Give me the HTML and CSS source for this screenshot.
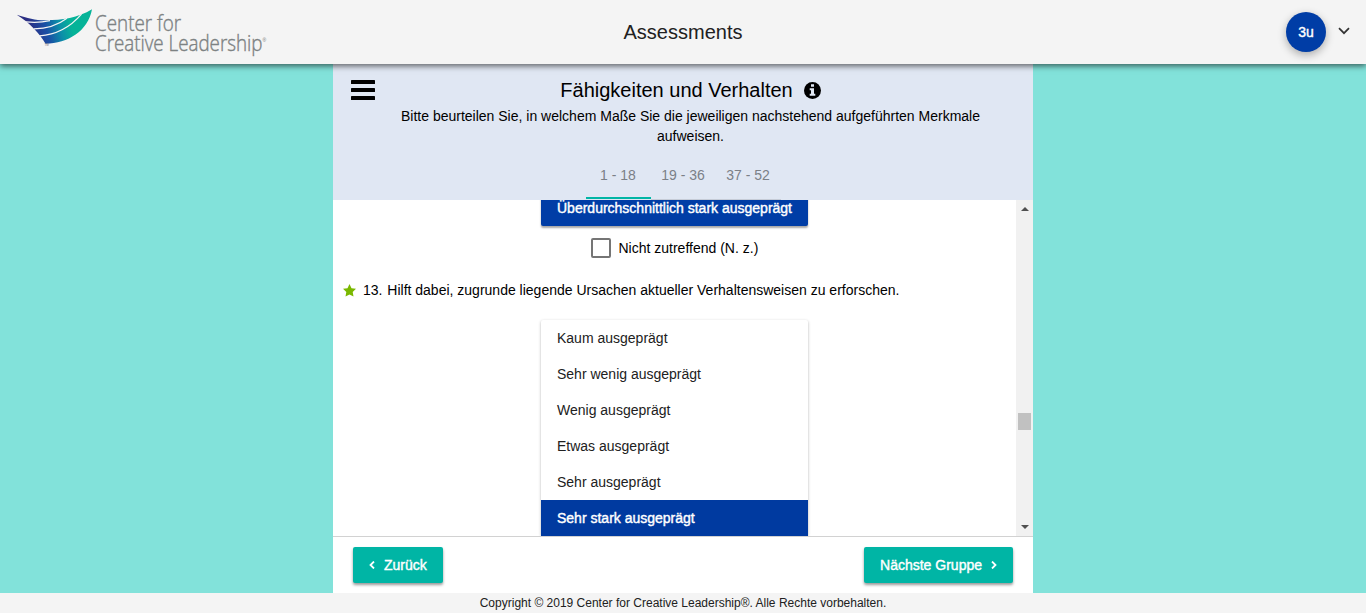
FILE: index.html
```html
<!DOCTYPE html>
<html lang="de">
<head>
<meta charset="utf-8">
<title>Assessments</title>
<link rel="stylesheet" href="styles.css">
</head>
<body>
<header class="topbar">
  <svg class="logo" viewBox="0 0 280 64" role="img" aria-label="Center for Creative Leadership">
    <defs>
      <linearGradient id="wing" gradientUnits="userSpaceOnUse" x1="30" y1="30" x2="74" y2="18">
        <stop offset="0" stop-color="#2b2e83"/>
        <stop offset=".35" stop-color="#1a4fa5"/>
        <stop offset=".65" stop-color="#0b8fa8"/>
        <stop offset=".9" stop-color="#05b398"/>
      </linearGradient>
    </defs>
    <path fill="url(#wing)" d="M16.700 14.800C28 18.500 36 20.500 46 20.300C62 20 78 18 92 9.300C88 31 68 43.500 45.500 43.800C40 34 30 23 16.700 14.800Z"/>
    <path class="feather" d="M26 21.800Q38 23.200 50 20.600M34 28.800Q53 28.800 67 18.300M39.500 35.800Q64 34.500 81.500 14.200"/>
    <text class="logo-tm" x="44.500" y="46">TM</text>
    <text class="logo-text" x="95" y="31" textLength="86" lengthAdjust="spacingAndGlyphs">Center for</text>
    <text class="logo-text" x="95" y="50.700" textLength="167.500" lengthAdjust="spacingAndGlyphs">Creative Leadership</text>
    <text class="logo-reg" x="262.500" y="42">®</text>
  </svg>
  <h1 class="topbar-title">Assessments</h1>
  <div class="account">
    <span class="avatar">3u</span>
    <svg class="account-caret" viewBox="0 0 12 8"><path d="M1 1.200L6 6.200L11 1.200"/></svg>
  </div>
</header>
<main class="stage">
  <section class="panel">
    <div class="intro">
      <svg class="menu-icon" viewBox="0 0 24 20"><rect width="24" height="4" rx=".6"/><rect y="8" width="24" height="4" rx=".6"/><rect y="16" width="24" height="4" rx=".6"/></svg>
      <div class="intro-body">
        <h2 class="intro-title"><span class="intro-heading">Fähigkeiten und Verhalten</span>
          <svg class="info-icon" viewBox="0 0 17 17"><circle cx="8.500" cy="8.500" r="8.500"/><path d="M7 2.300h3v2.500H7zM5.700 6.200H10v5.600h1.300v2H5.700v-2H7V8.200H5.700z"/></svg>
        </h2>
        <p class="intro-text">Bitte beurteilen Sie, in welchem Maße Sie die jeweiligen nachstehend aufgeführten Merkmale aufweisen.</p>
      </div>
    </div>
    <nav class="tabs"><a class="tab tab-active">1 - 18</a><a class="tab">19 - 36</a><a class="tab">37 - 52</a></nav>
    <div class="scroller">
      <div class="questions">
        <div class="option option-chosen option-last">Überdurchschnittlich stark ausgeprägt</div>
        <label class="na"><span class="checkbox"></span><span class="na-text">Nicht zutreffend (N. z.)</span></label>
        <div class="question">
          <svg class="star" viewBox="0 0 13 13"><path d="M6.500 0L8.500 4.200L13 4.800L9.700 7.900L10.500 12.600L6.500 10.400L2.500 12.600L3.300 7.900L0 4.800L4.500 4.200Z"/></svg>
          <span class="number">13.</span><span class="question-text">Hilft dabei, zugrunde liegende Ursachen aktueller Verhaltensweisen zu erforschen.</span>
        </div>
        <div class="options">
          <div class="option">Kaum ausgeprägt</div>
          <div class="option">Sehr wenig ausgeprägt</div>
          <div class="option">Wenig ausgeprägt</div>
          <div class="option">Etwas ausgeprägt</div>
          <div class="option">Sehr ausgeprägt</div>
          <div class="option option-chosen">Sehr stark ausgeprägt</div>
        </div>
      </div>
      <div class="scrollbar">
        <svg class="arrow" viewBox="0 0 8 4"><path d="M0 4L4 0L8 4Z"/></svg>
        <span class="thumb"></span>
        <svg class="arrow" viewBox="0 0 8 4"><path d="M0 0L4 4L8 0Z"/></svg>
      </div>
    </div>
    <div class="actions">
      <button class="button"><svg class="chevron" viewBox="0 0 6 8"><path d="M5 .5L1.500 4L5 7.500"/></svg><span>Zurück</span></button>
      <button class="button"><span>Nächste Gruppe</span><svg class="chevron" viewBox="0 0 6 8"><path d="M1 .5L4.500 4L1 7.500"/></svg></button>
    </div>
  </section>
</main>
<footer class="footer">Copyright © 2019 Center for Creative Leadership®. Alle Rechte vorbehalten.</footer>
</body>
</html>
```
FILE: styles.css
```css
* { box-sizing: border-box; }
body {
  margin: 0;
  height: 613px;
  display: flex;
  flex-direction: column;
  overflow: hidden;
  background: #82e2da;
  color: #000;
  font: 14px/20px "Liberation Sans", Arial, sans-serif;
}
h1, h2, p { margin: 0; font-weight: 400; }
.topbar {
  position: relative;
  z-index: 1;
  flex: none;
  height: 64px;
  display: grid;
  grid-template-columns: 280px 1fr 280px;
  align-items: center;
  background: #f4f4f4;
  box-shadow: 0 2px 6px rgba(0, 0, 0, .6);
}
.logo { width: 280px; height: 64px; }
.feather { fill: none; stroke: #f4f4f4; stroke-width: 1.2; }
.logo-text {
  font-family: "Open Sans", sans-serif;
  font-size: 21.5px;
  font-weight: 300;
  fill: #7d8283;
  stroke: #7d8283;
  stroke-width: .4px;
}
.logo-tm { font-size: 3px; fill: #777; }
.logo-reg { font-size: 5px; fill: #777; }
.topbar-title { text-align: center; font-size: 20px; line-height: 24px; color: #212121; }
.account { display: flex; align-items: center; justify-content: flex-end; gap: 12px; padding-right: 16px; }
.avatar {
  width: 40px;
  height: 40px;
  border-radius: 50%;
  background: #003da6;
  color: #fff;
  -webkit-text-stroke: .4px #fff;
  line-height: 40px;
  text-align: center;
  box-shadow: 0 3px 8px rgba(0, 0, 0, .3);
}
.account-caret { width: 12px; height: 8px; margin-top: -3px; }
.account-caret path { fill: none; stroke: #333; stroke-width: 1.7; }
.stage { flex: 1; min-height: 0; display: flex; justify-content: center; }
.panel { width: 700px; display: flex; flex-direction: column; background: #fff; }
.intro { height: 87px; display: flex; padding: 16px 35px 0 18px; background: #e0e7f3; }
.menu-icon { flex: none; width: 24px; height: 20px; }
.intro-body { flex: 1; padding-left: 8px; text-align: center; }
.intro-title { display: flex; justify-content: center; align-items: center; gap: 11px; height: 20px; font-size: 20px; }
.info-icon { width: 17px; height: 17px; }
.info-icon path { fill: #e0e7f3; }
.intro-text { width: 600px; margin: 6px auto 0; }
.tabs { height: 49px; display: flex; justify-content: center; background: #e0e7f3; color: #7b8087; }
.tab { width: 65px; line-height: 48px; text-align: center; border-bottom: 1px solid #c6ccd7; }
.tab-active { height: 48px; border-bottom: 2px solid #00b5a5; }
.scroller { height: 336px; display: flex; overflow: hidden; }
.questions { width: 683px; }
.options { width: 267px; margin: 20px 0 0 208px; border-radius: 2px; box-shadow: 0 1px 3px rgba(0, 0, 0, .3); }
.option { height: 36px; padding: 0 16px; line-height: 36px; color: #212121; }
.option-chosen { background: #003aa0; color: #fff; -webkit-text-stroke: .4px #fff; }
.option-last {
  width: 267px;
  margin: -10px 0 0 208px;
  border-radius: 0 0 2px 2px;
  background: #003da6;
  box-shadow: 0 2px 2px rgba(0, 0, 0, .35);
  white-space: nowrap;
}
.na { display: flex; align-items: center; gap: 7.5px; height: 20px; margin: 12px 0 0 258px; }
.checkbox { width: 20px; height: 20px; border: 2px solid #757575; border-radius: 2px; }
.question { display: flex; align-items: center; height: 20px; margin: 22px 0 0 10px; }
.star { width: 13px; height: 13px; margin-right: 7px; fill: #7ab800; }
.number { width: 24.3px; }
.scrollbar { width: 17px; display: flex; flex-direction: column; align-items: center; padding: 7px 0; background: #f1f1f1; }
.arrow { width: 8px; height: 4px; fill: #505050; }
.thumb { width: 13px; height: 17px; margin: 202px 0 95px; background: #c1c1c1; }
.actions { flex: 1; display: flex; justify-content: space-between; align-items: flex-start; padding: 10px 20px 0; border-top: 1px solid #d2d2d2; }
.button {
  height: 36px;
  display: flex;
  align-items: center;
  gap: 9px;
  padding: 0 16px;
  border: 0;
  border-radius: 2px;
  background: #00b5a5;
  color: #fff;
  font: 400 14px/36px "Liberation Sans", Arial, sans-serif;
  -webkit-text-stroke: .4px #fff;
  box-shadow: 0 2px 3px rgba(0, 0, 0, .4);
}
.chevron { width: 6px; height: 8px; fill: none; stroke: #fff; stroke-width: 1.8; }
.footer { flex: none; height: 20px; background: #f4f4f4; color: #212121; font-size: 12px; line-height: 20px; text-align: center; }
```
